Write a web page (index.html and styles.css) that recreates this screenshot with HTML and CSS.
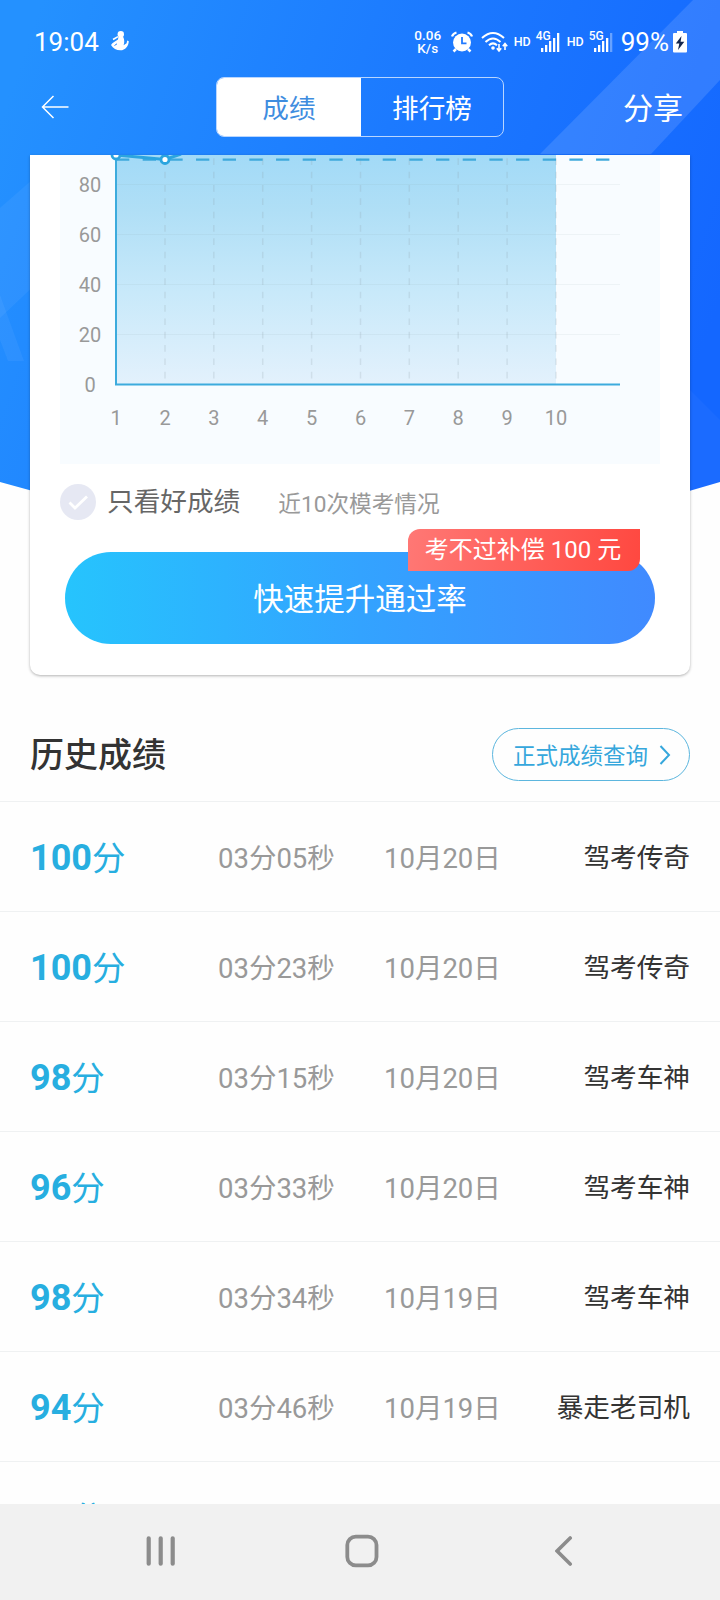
FILE: index.html
```html
<!DOCTYPE html>
<html lang="zh-CN">
<head>
    <meta charset="UTF-8">
    <meta name="viewport" content="width=device-width, initial-scale=1.0">
    <title>成绩</title>
    <link rel="stylesheet" href="styles.css">
</head>
<body>
    <div class="app">
        <svg class="backdrop" width="720" height="500" viewBox="0 0 720 500">
            <defs>
                <linearGradient id="sky" gradientUnits="userSpaceOnUse" x1="0" y1="120" x2="700" y2="360">
                    <stop offset="0" stop-color="#2491ff"/>
                    <stop offset="0.5" stop-color="#1c7aff"/>
                    <stop offset="1" stop-color="#1467ff"/>
                </linearGradient>
            </defs>
            <path d="M0 0H720V482Q690 491 660 499H60Q30 490 0 482Z" fill="url(#sky)"/>
            <g fill="#fff">
                <path d="M693 0H720V80L651 154H540Z" opacity="0.12"/>
                <path d="M0 208L40 173V280L0 318Z" opacity="0.05"/>
                <path d="M0 295L24 361H8L0 340Z" opacity="0.05"/>
                <path d="M680 380L720 420V482L680 494Z" opacity="0.03"/>
            </g>
        </svg>

        <div class="status-bar">
            <span class="clock">19:04</span>
            <svg class="status-person" width="18" height="20" viewBox="0 0 18 20" fill="#fff">
                <circle cx="9.8" cy="3.3" r="3.2"/>
                <path d="M7.400 6L12.200 6C13.600 8.600 13.500 12 12.600 14.200L15.600 12.200L16.200 9.600L17.800 10.200C17.500 15 14.500 19.300 9.300 19.300C5.500 19.300 2 17.300 0 14C1.500 11.500 4.500 10.500 7 8.500Z"/>
                <path d="M2 8.500L7 5.600" stroke="#fff" stroke-width="1.600"/>
                <path d="M3.500 14.500L6 12.800" stroke="#2584ff" stroke-width="1"/>
            </svg>
            <div class="net-speed">0.06<br>K/s</div>
            <svg class="status-alarm" width="22" height="22" viewBox="0 0 22 22" fill="none" stroke="#fff">
                <circle cx="11" cy="11.500" r="9" fill="#fff" stroke="none"/>
                <path d="M1 5.500Q2 2.500 5.500 1.500M21 5.500Q20 2.500 16.500 1.500" stroke-width="2.200"/>
                <path d="M5 18L2.500 20.500M17 18L19.500 20.500" stroke-width="2.500"/>
                <path d="M11 6V12.300H15.500" stroke="#2079ff" stroke-width="1.800"/>
            </svg>
            <svg class="status-wifi" width="27" height="22" viewBox="0 0 27 22" fill="none" stroke="#fff" stroke-width="2">
                <path d="M1 7Q12 -3 23 7M4.500 11Q12 4 19.500 11M8 14.200Q12 10.500 16 14.200"/>
                <circle cx="12" cy="17" r="1.800" fill="#fff" stroke="none"/>
                <path d="M18 13V20M15.800 17.200L18 20L20.200 17.200" stroke-width="1.600"/>
                <path d="M24 19V12.500M21.800 15.300L24 12.500L26.200 15.300" stroke-width="1.600"/>
            </svg>
            <span class="hd">HD</span>
            <div class="signal">
                <span class="signal-type">4G</span>
                <svg width="19" height="20" viewBox="0 0 19 20" fill="#fff">
                    <path d="M0 16h2.300v4H0zM4 13h2.300v7H4zM8 9h2.300v11H8zM12 6h2.300v14H12zM16 1h2.300v19H16z"/>
                </svg>
            </div>
            <span class="hd hd-second">HD</span>
            <div class="signal">
                <span class="signal-type">5G</span>
                <svg width="19" height="20" viewBox="0 0 19 20" fill="#fff">
                    <path d="M0 16h2.300v4H0zM4 13h2.300v7H4zM8 9h2.300v11H8zM12 6h2.300v14H12z"/>
                    <path d="M16 1h2.300v19H16z" opacity="0.35"/>
                </svg>
            </div>
            <span class="battery-text">99%</span>
            <svg class="battery" width="14" height="22" viewBox="0 0 14 22">
                <path d="M4 0H10V2H13Q14 2 14 3V20.500Q14 21.500 13 21.500H1Q0 21.500 0 20.500V3Q0 2 1 2H4Z" fill="#fff"/>
                <path d="M8.500 5L2.800 12.500H6.300L5 19L11.300 10.800H7.600Z" fill="#14264d"/>
            </svg>
        </div>

        <header class="header">
            <svg class="back" width="28" height="24" viewBox="0 0 28 24" fill="none" stroke="#fff" stroke-width="1.500">
                <path d="M12.500 1L1.500 12L12.500 23M1.500 12H27.500"/>
            </svg>
            <div class="tabs">
                <div class="tab active">成绩</div>
                <div class="tab">排行榜</div>
            </div>
            <div class="share">分享</div>
        </header>

        <section class="card">
            <div class="chart">
                <svg width="600" height="309" viewBox="60 155 600 309">
                    <defs>
                        <linearGradient id="area" x1="0" y1="0" x2="0" y2="1">
                            <stop offset="0" stop-color="#a2daf7"/>
                            <stop offset="0.25" stop-color="#b0dff6"/>
                            <stop offset="0.6" stop-color="#c8e9fa"/>
                            <stop offset="1" stop-color="#e3f1fc"/>
                        </linearGradient>
                    </defs>
                    <path d="M116 154H556V384H116Z" fill="url(#area)"/>
                    <path d="M116 184.500H620M116 234.500H620M116 284.500H620M116 334.500H620" stroke="#8296a0" stroke-opacity="0.09"/>
                    <path d="M165 158.300V384M213.800 158.300V384M262.700 158.300V384M311.600 158.300V384M360.500 158.300V384M409.300 158.300V384M458.200 158.300V384M507.100 158.300V384M556 158.300V384" stroke="#8d9ba6" stroke-opacity="0.2" stroke-width="1.500" stroke-dasharray="6.670 6.670"/>
                    <path d="M116 159.700H611" stroke="#3fa9dc" stroke-width="2.200" stroke-dasharray="13.330 13.340"/>
                    <path d="M116 154V384.500H620" fill="none" stroke="#3dabdd" stroke-width="2"/>
                    <path d="M116 155L165 159.500L181 154" fill="none" stroke="#2ba5df" stroke-width="3"/>
                    <circle cx="116" cy="155" r="4" fill="#fff" stroke="#2ba5df" stroke-width="2.800"/>
                    <circle cx="165" cy="159.500" r="4" fill="#fff" stroke="#2ba5df" stroke-width="2.800"/>
                    <g class="chart-label">
                        <text x="90" y="191.700">80</text>
                        <text x="90" y="241.700">60</text>
                        <text x="90" y="291.700">40</text>
                        <text x="90" y="341.700">20</text>
                        <text x="90" y="391.700">0</text>
                        <text x="116" y="424.700">1</text>
                        <text x="165" y="424.700">2</text>
                        <text x="213.800" y="424.700">3</text>
                        <text x="262.700" y="424.700">4</text>
                        <text x="311.600" y="424.700">5</text>
                        <text x="360.500" y="424.700">6</text>
                        <text x="409.300" y="424.700">7</text>
                        <text x="458.200" y="424.700">8</text>
                        <text x="507.100" y="424.700">9</text>
                        <text x="556" y="424.700">10</text>
                    </g>
                </svg>
            </div>
            <div class="filter">
                <svg width="36" height="36" viewBox="0 0 36 36">
                    <circle cx="18" cy="18" r="18" fill="#e6e8f3"/>
                    <path d="M9.500 18.500L15 24L27 12.500" fill="none" stroke="#fff" stroke-width="2.800"/>
                </svg>
                <span class="filter-text">只看好成绩</span>
                <span class="filter-hint">近10次模考情况</span>
            </div>
            <div class="boost">
                快速提升通过率
                <span class="boost-badge">考不过补偿 100 元</span>
            </div>
        </section>

        <section class="history">
            <div class="history-head">
                <h2>历史成绩</h2>
                <div class="query">
                    <span>正式成绩查询</span>
                    <svg width="12" height="20" viewBox="0 0 12 20" fill="none" stroke="#36a7dc" stroke-width="2">
                        <path d="M1.500 1L10 10L1.500 19"/>
                    </svg>
                </div>
            </div>
            <div class="row">
                <div class="score"><b>100</b>分</div>
                <div class="time">03分05秒</div>
                <div class="date">10月20日</div>
                <div class="rank">驾考传奇</div>
            </div>
            <div class="row">
                <div class="score"><b>100</b>分</div>
                <div class="time">03分23秒</div>
                <div class="date">10月20日</div>
                <div class="rank">驾考传奇</div>
            </div>
            <div class="row">
                <div class="score"><b>98</b>分</div>
                <div class="time">03分15秒</div>
                <div class="date">10月20日</div>
                <div class="rank">驾考车神</div>
            </div>
            <div class="row">
                <div class="score"><b>96</b>分</div>
                <div class="time">03分33秒</div>
                <div class="date">10月20日</div>
                <div class="rank">驾考车神</div>
            </div>
            <div class="row">
                <div class="score"><b>98</b>分</div>
                <div class="time">03分34秒</div>
                <div class="date">10月19日</div>
                <div class="rank">驾考车神</div>
            </div>
            <div class="row">
                <div class="score"><b>94</b>分</div>
                <div class="time">03分46秒</div>
                <div class="date">10月19日</div>
                <div class="rank">暴走老司机</div>
            </div>
            <div class="row">
                <div class="score"><b>98</b>分</div>
            </div>
        </section>

        <nav class="nav-bar">
            <svg width="30" height="30" viewBox="0 0 30 30" stroke="#8c8c8c" stroke-width="4.200" stroke-linecap="round">
                <path d="M3.700 2.300V27.700M15.700 2.300V27.700M27.700 2.300V27.700"/>
            </svg>
            <svg class="nav-home" width="34" height="34" viewBox="0 0 34 34" fill="none" stroke="#8c8c8c" stroke-width="3.800">
                <rect x="2.300" y="2.600" width="29.200" height="28.800" rx="8.500"/>
            </svg>
            <svg width="18" height="30" viewBox="0 0 18 30" fill="none" stroke="#8c8c8c" stroke-width="3.600" stroke-linecap="round">
                <path d="M15.200 2L2.100 15L15.200 28"/>
            </svg>
        </nav>
    </div>
</body>
</html>
```
FILE: styles.css
```css
* {
    margin: 0;
    padding: 0;
    box-sizing: border-box;
}

body {
    background: #fefefe;
    font-family: Roboto, 'Noto Sans CJK SC', sans-serif;
}

svg {
    display: block;
    flex-shrink: 0;
}

.app {
    position: relative;
    width: 720px;
    height: 1600px;
    display: flex;
    flex-direction: column;
    overflow: hidden;
}

.backdrop {
    position: absolute;
    top: 0;
    left: 0;
    z-index: -1;
}

/* status bar */
.status-bar {
    height: 76px;
    padding: 7px 33px 0 34px;
    display: flex;
    align-items: center;
    color: #fff;
    flex-shrink: 0;
}

.clock,
.battery-text {
    padding-top: 1px;
    font-size: 26px;
    line-height: 30px;
}

.status-person {
    margin-left: 12px;
    margin-top: -2px;
}

.net-speed {
    margin-left: auto;
    width: 28px;
    font-size: 13.500px;
    font-weight: 500;
    line-height: 13px;
    text-align: center;
}

.status-alarm {
    margin-left: 9px;
}

.status-wifi {
    margin-left: 8px;
}

.hd {
    margin-left: 6px;
    width: 18px;
    font-size: 12.500px;
    font-weight: 500;
}

.hd-second {
    margin-left: 7px;
}

.signal {
    position: relative;
    margin-left: 4px;
    width: 24px;
}

.signal svg {
    margin-left: 5px;
}

.signal-type {
    position: absolute;
    top: -3px;
    left: 0;
    font-size: 12px;
    font-weight: 500;
    line-height: 14px;
}

.battery-text {
    margin-left: 8px;
}

.battery {
    margin-left: 4px;
}

/* header */
.header {
    height: 79px;
    padding: 1px 37px 0 41px;
    display: flex;
    align-items: flex-start;
    color: #fff;
    flex-shrink: 0;
}

.back {
    margin-top: 18px;
}

.tabs {
    margin-left: 147px;
    width: 288px;
    height: 60px;
    display: flex;
    border: 1px solid #b9d6ff;
    border-radius: 8px;
    overflow: hidden;
}

.tab {
    flex: 1;
    padding-top: 1px;
    font-size: 26.670px;
    line-height: 60px;
    text-align: center;
}

.tab.active {
    flex: 0 0 144px;
    background: #fff;
    color: #3f8ddf;
}

.share {
    margin-left: auto;
    font-size: 30px;
    line-height: 63px;
}

/* chart card */
.card {
    margin: 0 30px;
    height: 520px;
    padding: 0 30px;
    background: #fff;
    border-radius: 0 0 10px 10px;
    box-shadow: 0 1px 3px rgba(0, 0, 0, 0.3);
    flex-shrink: 0;
}

.chart {
    background: #f8fcff;
}

.chart-label {
    font-size: 20px;
    fill: #999;
    text-anchor: middle;
}

.filter {
    height: 36px;
    margin-top: 20px;
    display: flex;
    align-items: center;
}

.filter-text {
    margin-left: 11px;
    padding-bottom: 5px;
    font-size: 26.670px;
    color: #666;
}

.filter-hint {
    margin-left: 38px;
    font-size: 22.670px;
    color: #999;
}

.boost {
    position: relative;
    margin: 32px 5px 0;
    height: 92px;
    border-radius: 46px;
    background: linear-gradient(90deg, #26c4fd, #33a3ff 50%, #408aff);
    color: #fff;
    font-size: 30.500px;
    line-height: 96px;
    text-align: center;
}

.boost-badge {
    position: absolute;
    top: -23px;
    right: 15px;
    width: 232px;
    height: 42px;
    padding-right: 2px;
    border-radius: 12px 0;
    background: linear-gradient(100deg, #ff7875, #ff4840);
    font-size: 24px;
    line-height: 43px;
}

/* history list */
.history {
    flex: 1;
    min-height: 0;
    overflow: hidden;
}

.history-head {
    height: 126px;
    padding: 33px 30px 0;
    display: flex;
    align-items: center;
    justify-content: space-between;
}

.history-head h2 {
    font-size: 34px;
    font-weight: 500;
    line-height: 50px;
    color: #333;
}

.query {
    width: 198px;
    height: 53px;
    padding: 0 18px 0 20px;
    display: flex;
    align-items: center;
    justify-content: space-between;
    border: 1px solid #5cb6de;
    border-radius: 27px;
    color: #36a7dc;
    font-size: 22.500px;
}

.query span {
    padding-bottom: 1px;
}

.row {
    height: 110px;
    padding: 0 30px 2px;
    display: grid;
    grid-template-columns: 188px 166px 1fr auto;
    align-items: center;
    border-top: 1px solid #eff1f2;
}

.score {
    font-size: 33.500px;
    color: #27aee0;
}

.score b {
    font-size: 36px;
}

.time,
.date {
    font-size: 27.500px;
    color: #999;
}

.rank {
    font-size: 26.670px;
    color: #333;
}

/* system navigation */
.nav-bar {
    height: 96px;
    padding: 0 147px 2px 145px;
    display: flex;
    align-items: center;
    justify-content: space-between;
    background: #f1f1f1;
    flex-shrink: 0;
}

.nav-home {
    margin-right: 6px;
}
```
